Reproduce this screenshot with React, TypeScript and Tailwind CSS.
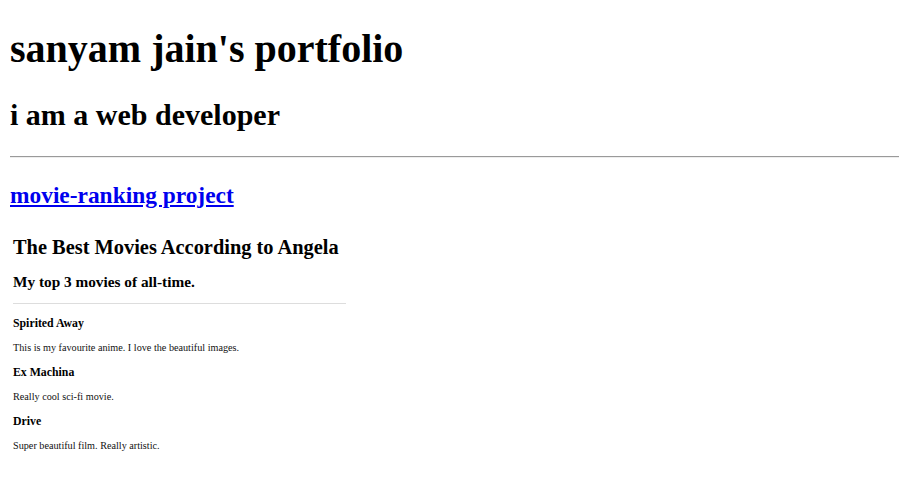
export default function App() {
  const movies = [
    { title: "Spirited Away", note: "This is my favourite anime. I love the beautiful images." },
    { title: "Ex Machina", note: "Really cool sci-fi movie." },
    { title: "Drive", note: "Super beautiful film. Really artistic." },
  ];

  return (
    <div className="min-h-screen bg-white pl-[10px] pt-[26px] font-['Liberation_Serif',_'Times_New_Roman',serif] text-black">
      <h1 className="text-[40px] font-bold leading-[1.15]">sanyam jain's portfolio</h1>
      <h2 className="mt-[26px] text-[30px] font-bold leading-[1.15]">i am a web developer</h2>
      <hr className="mt-[23px] border-0 border-t-[1.25px] border-b-[1.25px] border-t-[#9a9a9a] border-b-[#eeeeee]" />
      <h3 className="mt-[24px] text-[23.4px] font-bold leading-[1.15]">
        <a href="#" className="text-[#0000ee] underline">
          movie-ranking project
        </a>
      </h3>

      {/* screenshot of the project page */}
      <div className="mt-[24px] h-[251px] w-[336px] bg-white pl-[3px] pt-[4px]">
        <h1 className="text-[20.4px] font-bold leading-[23px]">The Best Movies According to Angela</h1>
        <h2 className="mt-[14px] text-[15.3px] font-bold leading-[17px]">My top 3 movies of all-time.</h2>
        <div className="mt-[13px] h-px bg-[#dddddd]" />
        {movies.map((m, i) => (
          <div key={m.title} className={i === 0 ? "mt-[12px]" : "mt-[11px]"}>
            <h3 className="text-[11.8px] font-bold leading-[14px]">{m.title}</h3>
            <p className="mt-[12px] text-[10.2px] leading-[12px] text-[#111]">{m.note}</p>
          </div>
        ))}
      </div>
    </div>
  );
}
